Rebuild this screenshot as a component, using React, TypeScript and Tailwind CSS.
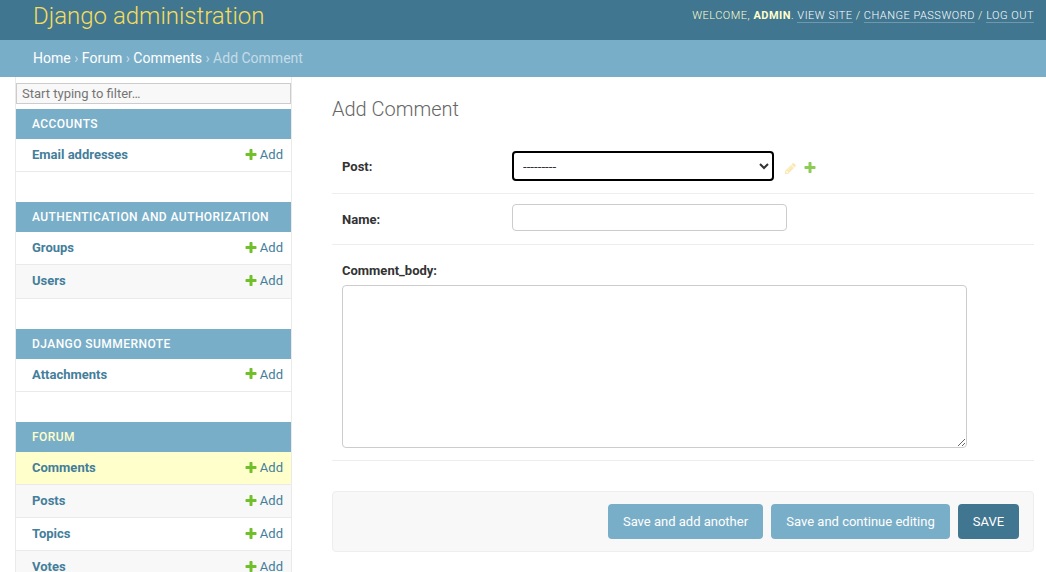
const PlusIcon = ({ faded = false }: { faded?: boolean }) => (
  <svg width={14} height={14} viewBox="0 0 1792 1792" className={faded ? 'shrink-0 opacity-80' : 'shrink-0'}>
    <path
      fill="#70bf2b"
      d="M1600 736v192q0 40-28 68t-68 28h-416v416q0 40-28 68t-68 28h-192q-40 0-68-28t-28-68v-416h-416q-40 0-68-28t-28-68v-192q0-40 28-68t68-28h416v-416q0-40 28-68t68-28h192q40 0 68 28t28 68v416h416q40 0 68 28t28 68z"
    />
  </svg>
);

const PencilIcon = () => (
  <svg width={13} height={13} viewBox="0 0 1792 1792" className="shrink-0 opacity-30">
    <path
      fill="#efb80b"
      d="M491 1536l91-91-235-235-91 91v107h128v128h107zm523-928q0-22-22-22-10 0-17 7l-542 542q-7 7-7 17 0 22 22 22 10 0 17-7l542-542q7-7 7-17zm-54-192l416 416-832 832h-416v-416zm683 96q0 53-37 90l-166 166-416-416 166-165q36-38 90-38 53 0 91 38l235 234q37 39 37 91z"
    />
  </svg>
);

const modules = [
  { name: 'Accounts', rows: ['Email addresses'] },
  { name: 'Authentication and Authorization', rows: ['Groups', 'Users'] },
  { name: 'Django Summernote', rows: ['Attachments'] },
  { name: 'Forum', rows: ['Comments', 'Posts', 'Topics', 'Votes'], current: 'Comments' },
];

const Sidebar = () => (
  <aside className="w-[292px] shrink-0 pl-[15px]">
    <div className="h-full border-x border-[#eaeaea] pt-[6px]">
      <div className="pb-[5px]">
        <input
          placeholder="Start typing to filter…"
          className="block h-[21px] w-full border border-[#cccccc] bg-[#f8f8f8] px-[5px] text-[13px] text-[#333333] placeholder:text-[#757575]"
        />
      </div>
      {modules.map((module) => (
        <div key={module.name} className="mb-[30px]">
          <div
            className={`flex h-[30px] items-center bg-[#79aec8] pl-4 text-[12px] font-medium uppercase tracking-[0.44px] ${
              module.current ? 'text-[#ffffcc]' : 'text-white'
            }`}
          >
            {module.name}
          </div>
          {module.rows.map((row, i) => (
            <div
              key={row}
              className={`flex h-[33.2px] items-center justify-between border-b border-[#eaeaea] pb-[0.7px] pl-4 pr-2 text-[13px] ${
                row === module.current ? 'bg-[#ffffcc]' : i % 2 === 1 ? 'bg-[#f8f8f8]' : 'bg-white'
              }`}
            >
              <span className="font-bold text-[#447e9b]">{row}</span>
              <span className="flex items-center gap-[2px] text-[#447e9b]">
                <PlusIcon />
                Add
              </span>
            </div>
          ))}
        </div>
      ))}
    </div>
  </aside>
);

const App = () => (
  <div className="h-[572px] overflow-hidden bg-white font-['Roboto',sans-serif] text-[14px] text-[#333333]">
    <header className="flex h-10 items-start justify-between bg-[#417690] pl-[33px] pr-3">
      <h1 className="text-[24px] font-light leading-[33px] text-[#f5dd5d]">Django administration</h1>
      <div className="flex pt-[9px] text-[11px] font-light uppercase leading-[13px] tracking-[0.5px] text-[#ffffcc] whitespace-pre">
        <span>Welcome, </span>
        <strong className="font-bold">Admin</strong>
        <span>. </span>
        <a className="border-b border-white/25 text-white">View site</a>
        <span> / </span>
        <a className="border-b border-white/25 text-white">Change password</a>
        <span> / </span>
        <a className="border-b border-white/25 text-white">Log out</a>
      </div>
    </header>

    <nav className="flex h-[37px] items-center bg-[#79aec8] pl-[33px] text-[14px] text-[#c4dce8]">
      <a className="text-white">Home</a>
      <span className="whitespace-pre"> › </span>
      <a className="text-white">Forum</a>
      <span className="whitespace-pre"> › </span>
      <a className="text-white">Comments</a>
      <span className="whitespace-pre"> › Add Comment</span>
    </nav>

    <div className="flex h-[495px]">
      <Sidebar />
      <main className="flex-1 pl-10 pr-3 pt-[20px]">
        <h1 className="text-[20px] font-light leading-6 text-[#666666]">Add Comment</h1>

        <div className="mt-[20px]">
          <div className="flex h-[53px] items-start border-b border-[#eeeeee] pl-[10px] pt-[10px]">
            <label className="mt-[8px] w-[170px] text-[13px] font-bold leading-[16px]">Post:</label>
            <select className="h-[30px] w-[262px] rounded-[4px] border-2 border-black bg-white pl-[5px] text-[13.33px] text-[#333333]">
              <option>---------</option>
            </select>
            <span className="ml-[10px] mt-[10px] flex items-center gap-[6px]">
              <PencilIcon />
              <PlusIcon faded />
            </span>
          </div>

          <div className="flex h-[51px] items-start border-b border-[#eeeeee] pl-[10px] pt-[10px]">
            <label className="mt-[8px] w-[170px] text-[13px] font-bold leading-[16px]">Name:</label>
            <input className="h-[27px] w-[275px] rounded-[4px] border border-[#cccccc] bg-white" />
          </div>

          <div className="h-[216px] border-b border-[#eeeeee] pl-[10px] pt-[18px]">
            <label className="block text-[13px] font-bold leading-[16px]">Comment_body:</label>
            <textarea className="mt-[6px] block h-[163px] w-[625px] rounded-[4px] border border-[#cccccc] bg-white" />
          </div>
        </div>

        <div className="mt-[30px] flex h-[61px] items-center justify-end gap-2 rounded-[4px] border border-[#eeeeee] bg-[#f8f8f8] pr-[14px]">
          <button className="h-[35px] w-[155px] rounded-[4px] bg-[#79aec8] text-[13px] text-white">
            Save and add another
          </button>
          <button className="h-[35px] w-[179px] rounded-[4px] bg-[#79aec8] text-[13px] text-white">
            Save and continue editing
          </button>
          <button className="h-[35px] w-[61px] rounded-[4px] bg-[#417690] text-[13px] text-white">
            SAVE
          </button>
        </div>
      </main>
    </div>
  </div>
);

export default App;
